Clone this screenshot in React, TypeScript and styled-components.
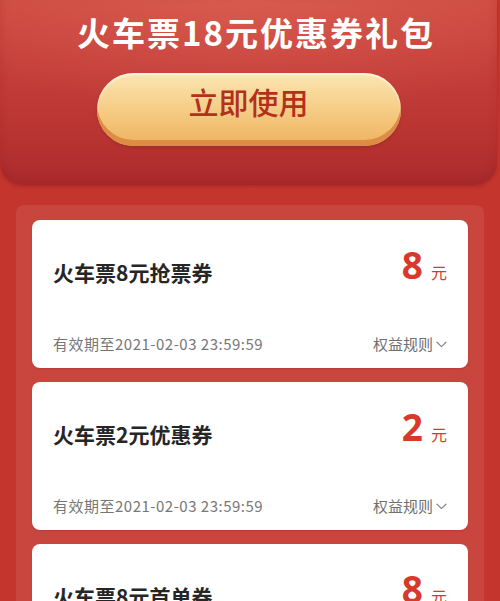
import React from "react";
import styled, { createGlobalStyle } from "styled-components";

const Global = createGlobalStyle`
  html, body { margin: 0; padding: 0; }
  body {
    background: #c4352d;
    font-family: "Noto Sans CJK SC", "Noto Sans", sans-serif;
    width: 500px;
    height: 601px;
    overflow: hidden;
  }
`;

const Page = styled.div`
  width: 500px;
  display: flex;
  flex-direction: column;
`;

const Hero = styled.header`
  width: 497px;
  height: 185px;
  box-sizing: border-box;
  border-radius: 0 0 22px 22px;
  background:
    radial-gradient(ellipse 70% 60% at 50% 0%, rgba(230, 110, 95, 0.45), rgba(230, 110, 95, 0) 100%),
    linear-gradient(180deg, #cd4a40 0%, #bf3a36 55%, #ad2b2d 100%);
  box-shadow: inset 0 -6px 10px rgba(120, 20, 20, 0.18), 0 2px 3px rgba(120, 20, 20, 0.25);
  display: flex;
  flex-direction: column;
  align-items: center;
  padding-top: 10px;
`;

const HeroTitle = styled.h1`
  margin: 0;
  color: #fff;
  font-size: 33px;
  font-weight: 600;
  line-height: 44px;
  letter-spacing: 2px;
  margin-left: 15px;
`;

const UseButton = styled.button`
  margin-top: 19px;
  width: 304px;
  height: 73px;
  border: none;
  border-radius: 37px;
  background: linear-gradient(180deg, #fce6b2 0%, #f6cf8a 45%, #eeb25e 100%);
  box-shadow: inset 0 -6px 0 #dc8c44, inset 0 2px 2px rgba(255, 255, 255, 0.6), 0 2px 3px rgba(120, 30, 20, 0.25);
  color: #b3301d;
  font-family: "Noto Sans CJK SC", sans-serif;
  font-size: 30px;
  font-weight: 500;
  padding: 0 0 18px;
  display: flex;
  align-items: center;
  justify-content: center;
`;

const ListPanel = styled.section`
  margin: 20px 16px 0 16px;
  background: #c9463e;
  border-radius: 8px;
  padding: 15px 16px;
  display: flex;
  flex-direction: column;
  gap: 14px;
`;

const Card = styled.article`
  background: #fff;
  border-radius: 8px;
  height: 148px;
  box-sizing: border-box;
  padding: 28px 21px 0 21px;
  display: flex;
  flex-direction: column;
  box-shadow: 0 1px 2px rgba(120, 20, 20, 0.2);
`;

const TopRow = styled.div`
  display: flex;
  justify-content: space-between;
  align-items: flex-end;
  height: 36px;
`;

const CardTitle = styled.div`
  font-size: 21px;
  font-weight: 600;
  color: #262626;
  line-height: 21px;
  margin-bottom: 1px;
`;

const Amount = styled.div`
  display: flex;
  align-items: baseline;
  color: #d8392b;
`;

const AmountNum = styled.span`
  font-family: "Noto Sans", "Noto Sans CJK SC", sans-serif;
  font-size: 37px;
  font-weight: 700;
  line-height: 36px;
`;

const AmountUnit = styled.span`
  font-size: 16px;
  font-weight: 400;
  margin-left: 8px;
`;

const FooterRow = styled.div`
  margin-top: 50px;
  display: flex;
  justify-content: space-between;
  align-items: center;
  font-size: 15px;
  color: #777;
  line-height: 20px;
`;

const Validity = styled.span`
  letter-spacing: 0.5px;
`;

const Rules = styled.div`
  display: flex;
  align-items: center;
  gap: 3px;
  color: #6f6f6f;
`;

const Chevron = () => (
  <svg width="11" height="7" viewBox="0 0 11 7" fill="none">
    <path d="M1 1.2 L5.5 5.6 L10 1.2" stroke="#888" strokeWidth="1.2" strokeLinecap="round" strokeLinejoin="round" />
  </svg>
);

const coupons = [
  { title: "火车票8元抢票券", amount: "8" },
  { title: "火车票2元优惠券", amount: "2" },
  { title: "火车票8元首单券", amount: "8" },
];

export default function App() {
  return (
    <>
      <Global />
      <Page>
        <Hero>
          <HeroTitle>火车票18元优惠券礼包</HeroTitle>
          <UseButton>立即使用</UseButton>
        </Hero>
        <ListPanel>
          {coupons.map((c, i) => (
            <Card key={i}>
              <TopRow>
                <CardTitle>{c.title}</CardTitle>
                <Amount>
                  <AmountNum>{c.amount}</AmountNum>
                  <AmountUnit>元</AmountUnit>
                </Amount>
              </TopRow>
              <FooterRow>
                <Validity>有效期至2021-02-03 23:59:59</Validity>
                <Rules>
                  权益规则
                  <Chevron />
                </Rules>
              </FooterRow>
            </Card>
          ))}
        </ListPanel>
      </Page>
    </>
  );
}
